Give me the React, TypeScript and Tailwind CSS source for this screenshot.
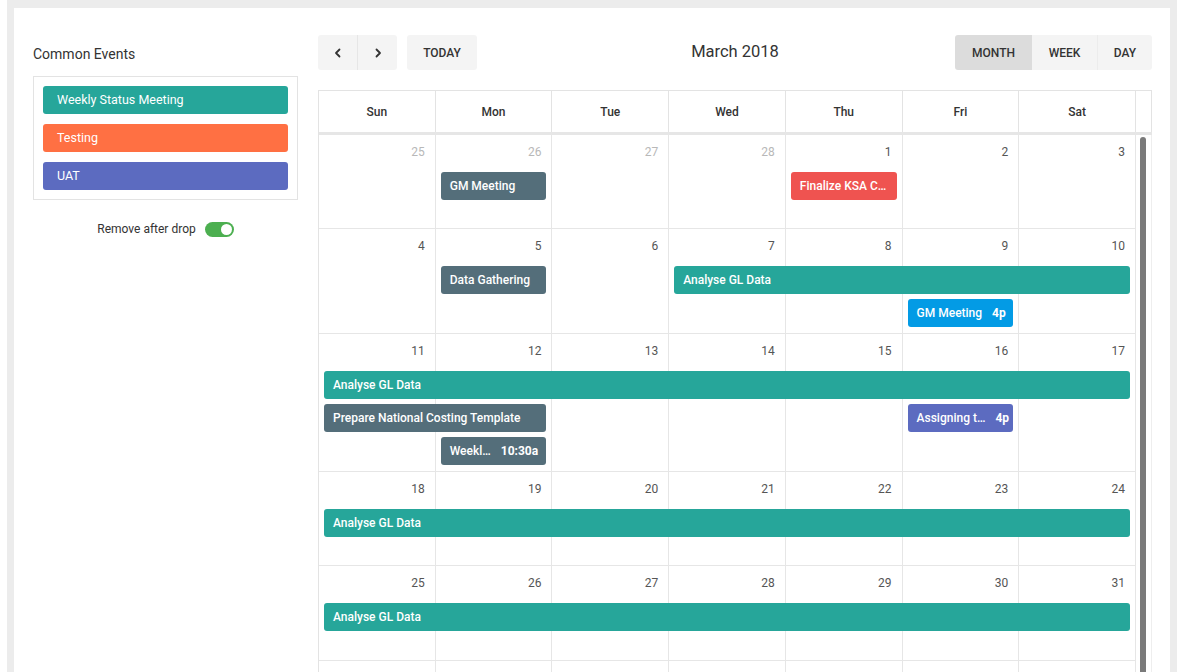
import React from "react";

type Ev = { col: number; span: number; title: string; time?: string; color: string };
type Week = { h: number; days: { n: number; o?: boolean; hide?: boolean }[]; levels: Ev[][] };

const colStart = ["", "col-start-1", "col-start-2", "col-start-3", "col-start-4", "col-start-5", "col-start-6", "col-start-7"];
const colSpan = ["", "col-span-1", "col-span-2", "col-span-3", "col-span-4", "col-span-5", "col-span-6", "col-span-7"];
const rowStart = ["", "row-start-1", "row-start-2", "row-start-3", "row-start-4"];

const TEAL = "bg-[#26a69a]";
const SLATE = "bg-[#546e7a]";
const RED = "bg-[#ef5350]";
const BLUE = "bg-[#039be5]";
const INDIGO = "bg-[#5c6bc0]";

const d = (arr: number[], other: boolean[] = [], hide = false) => arr.map((n, i) => ({ n, o: !!other[i], hide }));

const weeks: Week[] = [
  {
    h: 94,
    days: d([25, 26, 27, 28, 1, 2, 3], [true, true, true, true]),
    levels: [
      [
        { col: 2, span: 1, title: "GM Meeting", color: SLATE },
        { col: 5, span: 1, title: "Finalize KSA C…", color: RED },
      ],
    ],
  },
  {
    h: 105,
    days: d([4, 5, 6, 7, 8, 9, 10]),
    levels: [
      [
        { col: 2, span: 1, title: "Data Gathering", color: SLATE },
        { col: 4, span: 4, title: "Analyse GL Data", color: TEAL },
      ],
      [{ col: 6, span: 1, title: "GM Meeting", time: "4p", color: BLUE }],
    ],
  },
  {
    h: 138,
    days: d([11, 12, 13, 14, 15, 16, 17]),
    levels: [
      [{ col: 1, span: 7, title: "Analyse GL Data", color: TEAL }],
      [
        { col: 1, span: 2, title: "Prepare National Costing Template", color: SLATE },
        { col: 6, span: 1, title: "Assigning t…", time: "4p", color: INDIGO },
      ],
      [{ col: 2, span: 1, title: "Weekl…", time: "10:30a", color: SLATE }],
    ],
  },
  {
    h: 94,
    days: d([18, 19, 20, 21, 22, 23, 24]),
    levels: [[{ col: 1, span: 7, title: "Analyse GL Data", color: TEAL }]],
  },
  {
    h: 95,
    days: d([25, 26, 27, 28, 29, 30, 31]),
    levels: [[{ col: 1, span: 7, title: "Analyse GL Data", color: TEAL }]],
  },
  {
    h: 94,
    days: d([1, 2, 3, 4, 5, 6, 7], [true, true, true, true, true, true, true], true),
    levels: [],
  },
];

const dayNames = ["Sun", "Mon", "Tue", "Wed", "Thu", "Fri", "Sat"];

function Chevron({ dir }: { dir: "l" | "r" }) {
  return (
    <svg width="10" height="10" viewBox="0 0 10 10" fill="none">
      <path
        d={dir === "l" ? "M6.5 1.5 L3 5 L6.5 8.5" : "M3.5 1.5 L7 5 L3.5 8.5"}
        stroke="#333"
        strokeWidth="1.8"
        strokeLinecap="round"
        strokeLinejoin="round"
      />
    </svg>
  );
}

export default function App() {
  return (
    <div className="h-[672px] overflow-hidden bg-white pl-[7px] pr-[6px] font-['Roboto',sans-serif]">
      <div className="h-full bg-[#ececec] px-[7px] pt-[8px]">
        <div className="flex h-full bg-white pl-[19px] pr-[18px] pt-[27px]">
          {/* Sidebar */}
          <div className="w-[265px] shrink-0 pt-[9px]">
            <div className="h-[20px] text-[14px] leading-[20px] text-[#333]">Common Events</div>
            <div className="mt-[12px] flex flex-col gap-[10px] border border-[#e3e3e3] p-[9px]">
              <div className="flex h-[28px] items-center rounded-[3px] bg-[#26a69a] pl-[14px] text-[12.5px] text-white">
                Weekly Status Meeting
              </div>
              <div className="flex h-[28px] items-center rounded-[3px] bg-[#ff7043] pl-[14px] text-[12.5px] text-white">
                Testing
              </div>
              <div className="flex h-[28px] items-center rounded-[3px] bg-[#5c6bc0] pl-[14px] text-[12.5px] text-white">
                UAT
              </div>
            </div>
            <div className="mt-[20px] flex items-center justify-center gap-[9px]">
              <span className="text-[12px] text-[#333]">Remove after drop</span>
              <span className="relative flex h-[15px] w-[29px] items-center justify-end rounded-full bg-[#4caf50] pr-[2px]">
                <span className="h-[11px] w-[11px] rounded-full bg-white" />
              </span>
            </div>
          </div>

          {/* Calendar */}
          <div className="ml-[20px] flex min-w-0 flex-1 flex-col">
            <div className="grid h-[35px] grid-cols-[1fr_auto_1fr] items-center">
              <div className="flex h-[35px] gap-[10px]">
                <div className="flex h-[35px] overflow-hidden rounded-[3px]">
                  <div className="flex h-[35px] w-[40px] items-center justify-center border-r border-[#e6e6e6] bg-[#f4f4f4]">
                    <Chevron dir="l" />
                  </div>
                  <div className="flex h-[35px] w-[39px] items-center justify-center bg-[#f4f4f4]">
                    <Chevron dir="r" />
                  </div>
                </div>
                <div className="flex h-[35px] w-[70px] items-center justify-center rounded-[3px] bg-[#f4f4f4] text-[12px] font-medium text-[#333]">
                  TODAY
                </div>
              </div>
              <div className="text-[16.5px] text-[#333]">March 2018</div>
              <div className="flex h-[35px] justify-end">
                <div className="flex h-[35px] overflow-hidden rounded-[3px] text-[12px] font-medium text-[#333]">
                  <div className="flex h-[35px] w-[77px] items-center justify-center bg-[#dcdcdc]">MONTH</div>
                  <div className="flex h-[35px] w-[66px] items-center justify-center border-r border-[#ececec] bg-[#f4f4f4]">WEEK</div>
                  <div className="flex h-[35px] w-[54px] items-center justify-center bg-[#f4f4f4]">DAY</div>
                </div>
              </div>
            </div>

            {/* Table */}
            <div className="mt-[20px] flex flex-col border-l border-t border-[#e3e3e3]">
              {/* header */}
              <div className="flex border-b-[3px] border-[#e6e6e6]">
                <div className="grid flex-1 grid-cols-7">
                  {dayNames.map((n) => (
                    <div
                      key={n}
                      className="flex h-[41px] items-center justify-center border-r border-[#e3e3e3] text-[12px] font-medium text-[#333]"
                    >
                      {n}
                    </div>
                  ))}
                </div>
                <div className="w-[16px] border-r border-[#e3e3e3]" />
              </div>
              {/* body */}
              <div className="flex">
                <div className="flex flex-1 flex-col">
                  {weeks.map((w, wi) => (
                    <div key={wi} className="relative border-b border-[#e6e6e6]" style={{ height: w.h }}>
                      <div className="absolute inset-0 grid grid-cols-7">
                        {w.days.map((day, di) => (
                          <div
                            key={di}
                            className={
                              "border-r border-[#e6e6e6] pr-[10px] pt-[9px] text-right text-[12px] leading-[16px] " +
                              (day.o ? "text-[#b8b8b8]" : "text-[#555]")
                            }
                          >
                            {day.hide ? null : day.n}
                          </div>
                        ))}
                      </div>
                      <div className="relative grid grid-cols-7 gap-y-[5px] pt-[37px]">
                        {w.levels.map((lvl, li) =>
                          lvl.map((ev, ei) => (
                            <div
                              key={li + "-" + ei}
                              className={
                                colStart[ev.col] +
                                " " +
                                colSpan[ev.span] +
                                " " +
                                rowStart[li + 1] +
                                " ml-[5px] mr-[6px] flex h-[28px] items-center overflow-hidden whitespace-nowrap rounded-[3px] pl-[9px] text-[12px] font-medium text-white " +
                                ev.color
                              }
                            >
                              <span>{ev.title}</span>
                              {ev.time && <span className="ml-[10px] font-bold">{ev.time}</span>}
                            </div>
                          ))
                        )}
                      </div>
                    </div>
                  ))}
                </div>
                <div className="relative w-[16px] border-r border-[#eeeeee]">
                  <div className="absolute left-[4px] top-[2px] h-[700px] w-[6px] rounded-t-full bg-[#7a7a7a]" />
                </div>
              </div>
            </div>
          </div>
        </div>
      </div>
    </div>
  );
}
